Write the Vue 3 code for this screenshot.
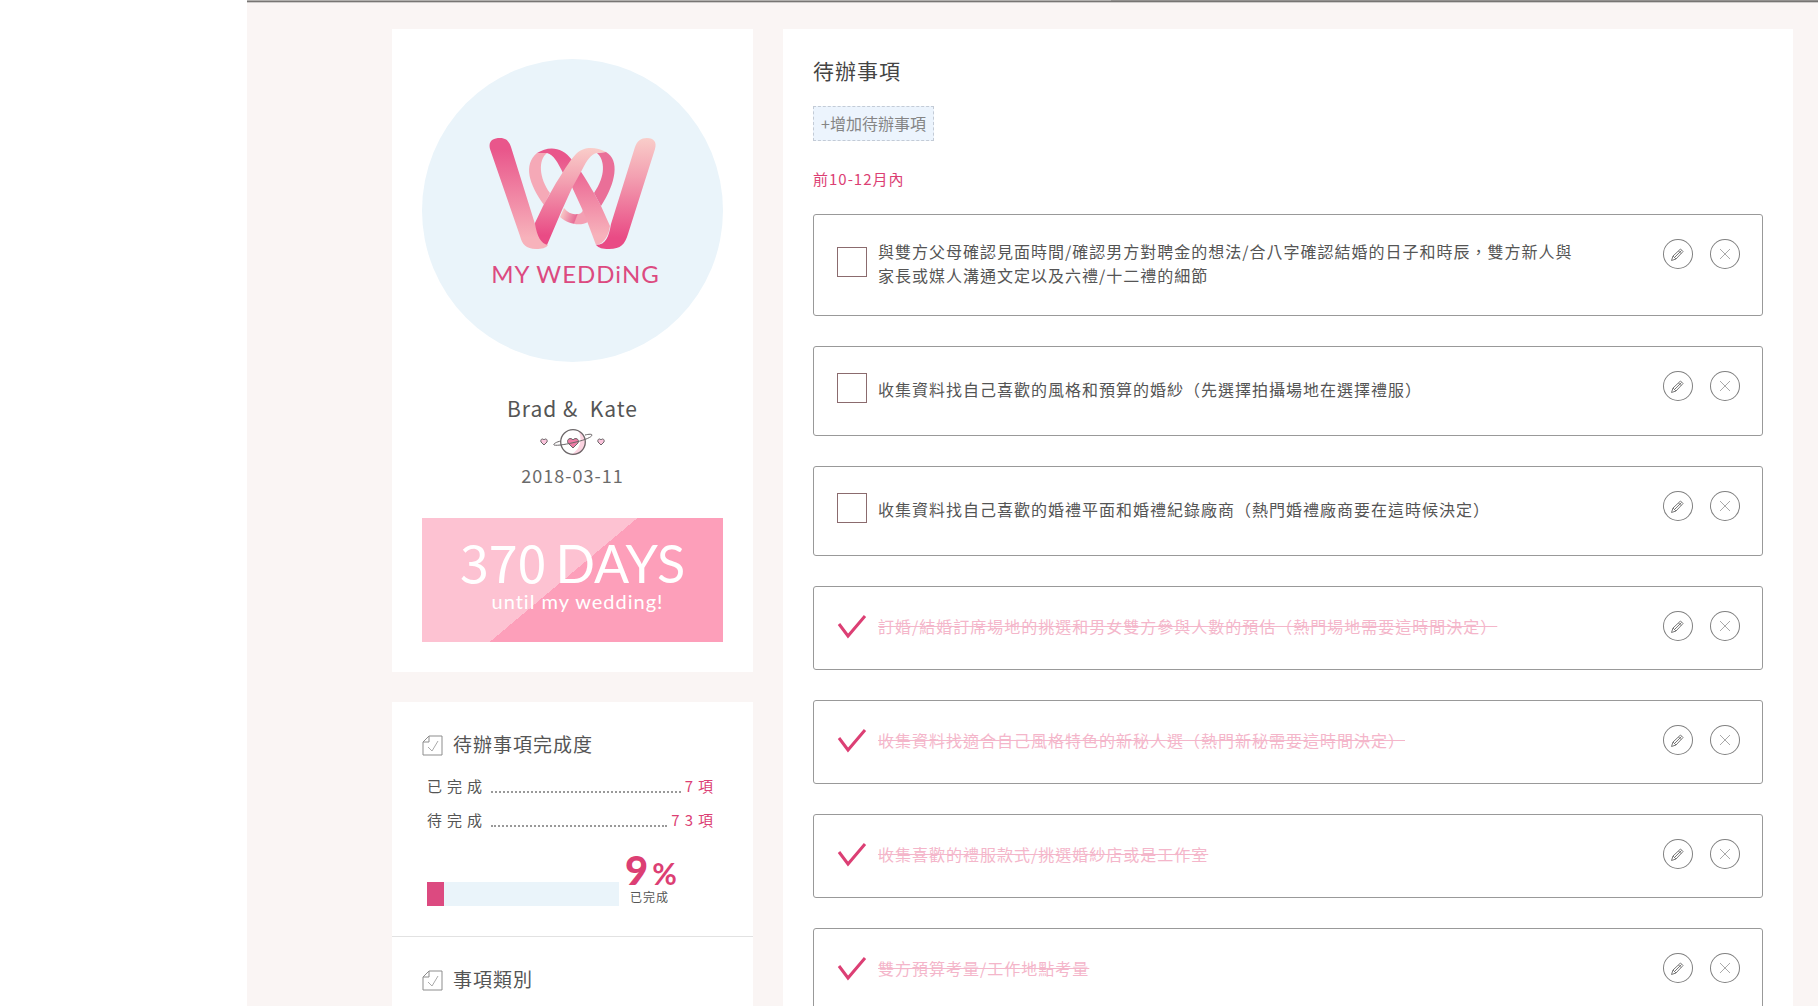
<template>
  <div class="page">
    <div class="gutter"></div>
    <main class="main">
      <div class="topbar"><span class="topbar-left"></span><span class="topbar-right"></span></div>

      <div class="content">
        <aside class="sidebar">
          <!-- 新人資訊 -->
          <section class="card profile">
            <div class="avatar">
              <svg class="avatar-logo" viewBox="0 0 168 112" aria-hidden="true">
                <defs>
                  <linearGradient id="down" x1="0" y1="0" x2="0" y2="1">
                    <stop offset="0.1" stop-color="#e9568b" />
                    <stop offset="0.9" stop-color="#f7b2bb" />
                  </linearGradient>
                  <linearGradient id="up" x1="0" y1="0" x2="0" y2="1">
                    <stop offset="0" stop-color="#f9cdc9" />
                    <stop offset="0.35" stop-color="#f3a0b1" />
                    <stop offset="0.9" stop-color="#e94b85" />
                  </linearGradient>
                  <linearGradient id="loop" gradientUnits="userSpaceOnUse" x1="72" y1="74" x2="93" y2="82">
                    <stop offset="0" stop-color="#f9cdc9" />
                    <stop offset="0.7" stop-color="#e76c96" />
                    <stop offset="0.75" stop-color="#f49fb3" />
                  </linearGradient>
                </defs>
                <path fill="url(#loop)" d="M75 70C79 75 84 77 88 76C92 76 94 74 94 70L99 84C92 88 80 87 71 79Z" />
                <path fill="url(#down)" d="M48 15C59 8 73 8 83 22C93 34 98 43 105 55L112 68L121 88C120 97 115 106 107 107L98 83L94 73L83 49C79 43 77 40 74 35C69 25 65 17 58 15Z" />
                <path fill="#f5a9b7" d="M48 15C34 27 40 46 55 67L61 55C50 40 49 22 58 15Z" />
                <path fill="#ea6f98" d="M117 14C131 22 127 45 112 68L105 55C117 38 116 22 108 15Z" />
                <path fill="url(#up)" d="M117 14C107 9 95 8 87 16C80 23 73 36 67 45L54 68L45 87C43 97 49 107 58 107L73 72L83 50L93 32C98 22 102 16 108 15Z" />
                <path fill="url(#down)" d="M1 11C-1 3 4 0 11 0C17 0 20 3 22 9L46 86C48 98 52 106 59 107C57 110 53 111 47 111C37 111 33 106 31 98Z" />
                <path fill="url(#up)" d="M146 9C148 3 152 0 158 0C165 0 168 4 166 11L139 96C136 106 132 111 120 111C113 111 110 110 107 107C117 107 120 98 122 86Z" />
              </svg>
              <span class="avatar-name">MY WEDDiNG</span>
            </div>

            <h2 class="couple">Brad &amp;&nbsp; Kate</h2>
            <svg class="planet" viewBox="0 0 66 28" aria-hidden="true">
              <path d="M30.500 27a13 13 0 0 0 15-15c-2-6-5-9-7-9c5 10 0 20-8 24z" fill="#fbd3e0" />
              <circle cx="33" cy="14" r="12.300" fill="none" stroke="#6b6668" stroke-width="1.300" />
              <path d="M33 20l-5-5c-2-4 3-6 5-3c2-3 7-1 5 3z" fill="#ee7ba5" stroke="#6b6668" />
              <path d="M21 13c-5 1-8 3-7 4c3 1 14-1 22-3c9-2 16-5 16-7c0-1-3-1-7 0" fill="none" stroke="#6b6668" />
              <path d="M4 17L1 14C0 11 3 10 4 12C5 10 8 11 7 14z" fill="#fbc4dc" stroke="#6b6668" />
              <path d="M61 17L58 14C57 11 60 10 61 12C62 10 65 11 64 14z" fill="#fbc4dc" stroke="#6b6668" />
            </svg>
            <p class="date">2018-03-11</p>

            <div class="countdown">
              <p class="countdown-main">
                <span class="countdown-num">370</span>
                <span class="countdown-unit">DAYS</span>
              </p>
              <p class="countdown-sub">until my wedding!</p>
            </div>
          </section>

          <!-- 完成度 -->
          <div class="card">
            <section class="panel">
              <h3 class="panel-title">
                <svg class="note" viewBox="0 0 21 21" aria-hidden="true">
                  <path d="M7 1H20V20H1V7ZM7 1V7H1" />
                  <path class="note-tick" d="M6 12L10 16L16 6" />
                </svg>
                待辦事項完成度
              </h3>
              <ul class="stats">
                <li v-for="stat in stats" :key="stat.label" class="stat">
                  <span>{{ stat.label }}</span>
                  <span class="dots"></span>
                  <span class="stat-value">{{ stat.count }}項</span>
                </li>
              </ul>
              <div class="progress">
                <div class="bar">
                  <div class="bar-fill" :style="{ width: percent + '%' }"></div>
                </div>
                <div class="percent">
                  <p class="percent-value">{{ percent }}<span class="percent-sign">%</span></p>
                  <p class="percent-label">已完成</p>
                </div>
              </div>
            </section>
            <section class="panel">
              <h3 class="panel-title">
                <svg class="note" viewBox="0 0 21 21" aria-hidden="true">
                  <path d="M7 1H20V20H1V7ZM7 1V7H1" />
                  <path class="note-tick" d="M6 12L10 16L16 6" />
                </svg>
                事項類別
              </h3>
            </section>
          </div>
        </aside>

        <!-- 待辦清單 -->
        <section class="card todos">
          <h1 class="title">待辦事項</h1>
          <button type="button" class="add">+增加待辦事項</button>
          <h2 class="period">前10-12月內</h2>

          <ul class="list">
            <li v-for="todo in todos" :key="todo.id" class="todo" :class="{ done: todo.done }">
              <label class="todo-label">
                <input v-model="todo.done" type="checkbox" class="todo-input" />
                <svg v-if="todo.done" class="tick" viewBox="0 0 30 30" aria-hidden="true">
                  <path d="M2 13L11 25L28 5" />
                </svg>
                <span v-else class="box"></span>
                <span class="todo-text">{{ todo.text }}</span>
              </label>
              <div class="actions">
                <button type="button" class="round" aria-label="編輯">
                  <svg viewBox="0 0 30 30">
                    <path d="M8.500 21.500L10 17L17.500 10L20 12.500L13 20ZM10 17L13 20M12 18L18.500 11.500M15.500 12L18 14.500" />
                  </svg>
                </button>
                <button type="button" class="round" aria-label="刪除" @click="removeTodo(todo.id)">
                  <svg viewBox="0 0 30 30">
                    <path class="cross" d="M10 10L20 20M20 10L10 20" />
                  </svg>
                </button>
              </div>
            </li>
          </ul>
        </section>
      </div>
    </main>
  </div>
</template>

<script setup>
import { ref } from 'vue'

const percent = 9

const stats = [
  { label: '已完成', count: 7 },
  { label: '待完成', count: 73 },
]

const todos = ref([
  { id: 1, done: false, text: '與雙方父母確認見面時間/確認男方對聘金的想法/合八字確認結婚的日子和時辰，雙方新人與家長或媒人溝通文定以及六禮/十二禮的細節' },
  { id: 2, done: false, text: '收集資料找自己喜歡的風格和預算的婚紗（先選擇拍攝場地在選擇禮服）' },
  { id: 3, done: false, text: '收集資料找自己喜歡的婚禮平面和婚禮紀錄廠商（熱門婚禮廠商要在這時候決定）' },
  { id: 4, done: true, text: '訂婚/結婚訂席場地的挑選和男女雙方參與人數的預估（熱門場地需要這時間決定）' },
  { id: 5, done: true, text: '收集資料找適合自己風格特色的新秘人選（熱門新秘需要這時間決定）' },
  { id: 6, done: true, text: '收集喜歡的禮服款式/挑選婚紗店或是工作室' },
  { id: 7, done: true, text: '雙方預算考量/工作地點考量' },
])

const removeTodo = (id) => {
  todos.value = todos.value.filter((todo) => todo.id !== id)
}
</script>

<style>
html,
body {
  height: 100%;
  background: #fff;
}

body {
  overflow: hidden;
}

#app {
  height: 100%;
}
</style>

<style scoped>
* {
  box-sizing: border-box;
}

h1,
h2,
h3,
p,
ul {
  margin: 0;
  padding: 0;
  font-weight: 400;
  list-style: none;
}

.page {
  display: flex;
  height: 100%;
  overflow: hidden;
  color: #555;
  font-family: 'Noto Sans CJK TC', 'Noto Sans', sans-serif;
  font-size: 16px;
  line-height: 24px;
  letter-spacing: 1px;
}

.gutter {
  flex: 0 1 247px;
}

.main {
  flex: 1;
  min-width: 0;
  background: #faf5f4;
}

.topbar {
  display: flex;
  height: 3px;
}

.topbar-left,
.topbar-right {
  flex: 55;
  background: #b1afad;
  border-bottom: 1px solid #cfcccb;
  box-shadow: inset 0 -1px #777573;
}

.topbar-right {
  flex: 45;
  background: #93918f;
}

.content {
  display: flex;
  align-items: flex-start;
  gap: 30px;
  padding: 26px 25px 30px 145px;
}

.sidebar {
  flex: 0 0 361px;
}

.card {
  background: #fff;
}

.profile {
  display: flex;
  flex-direction: column;
  align-items: center;
  padding: 30px;
  margin-bottom: 30px;
}

.avatar {
  display: flex;
  flex-direction: column;
  align-items: center;
  width: 100%;
  height: 303px;
  padding-top: 79px;
  border-radius: 50%;
  background: #eaf4fa;
}

.avatar-logo {
  width: 168px;
  height: 112px;
}

.avatar-name {
  margin-top: 8px;
  padding-left: 6px;
  color: #dc4a80;
  font-family: Lato, 'Noto Sans', sans-serif;
  font-size: 24px;
  line-height: 32px;
}

.couple {
  margin-top: 31px;
  font-size: 21px;
  line-height: 30px;
}

.planet {
  width: 66px;
  height: 28px;
  margin-top: 5px;
}

.date {
  margin: 7px 0 31px;
  color: #6b6b6b;
  font-size: 18px;
}

.countdown {
  width: 100%;
  height: 124px;
  padding-top: 17px;
  color: #fff;
  background: linear-gradient(140deg, #fdc2d2 48%, #fd9fba 48%);
}

.countdown-main {
  display: flex;
  align-items: baseline;
  justify-content: center;
  gap: 9px;
  line-height: 52px;
  letter-spacing: 0;
}

.countdown-num {
  font-size: 52px;
}

.countdown-unit {
  font-family: Lato, sans-serif;
  font-size: 52px;
  font-weight: 400;
}

.countdown-sub {
  padding-left: 10px;
  font-family: Lato, sans-serif;
  font-size: 20px;
  text-align: center;
}

.panel {
  padding: 30px;
}

.panel + .panel {
  border-top: 1px solid #e2e2e2;
}

.panel-title {
  display: flex;
  align-items: flex-end;
  gap: 10px;
  font-size: 19px;
}

.note {
  width: 21px;
  height: 21px;
  fill: none;
  stroke: #8d8d8d;
}

.note-tick {
  stroke: #aaa;
}

.stats {
  display: grid;
  gap: 10px;
  margin-top: 18px;
  padding: 0 5px;
}

.stat {
  display: flex;
  font-size: 15px;
  letter-spacing: 5px;
}

.dots {
  flex: 1;
  margin: 0 4px 5px 4px;
  border-bottom: 2px dotted #999;
}

.stat-value {
  color: #dc3f74;
}

.progress {
  display: flex;
  align-items: flex-end;
  gap: 6px;
  margin-top: 19px;
  padding: 0 5px;
}

.bar {
  width: 66%;
  height: 24px;
  background: #eaf4fa;
}

.bar-fill {
  height: 100%;
  background: #dc4a80;
}

.percent-value {
  display: flex;
  align-items: baseline;
  gap: 4px;
  height: 38px;
  color: #dc3f74;
  font-family: Lato, sans-serif;
  font-size: 40px;
  font-weight: 900;
  line-height: 38px;
  letter-spacing: 0;
}

.percent-sign {
  font-size: 30px;
  font-weight: 700;
}

.percent-label {
  padding: 0 0 1px 5px;
  font-size: 12px;
  line-height: 16px;
}

.todos {
  flex: 1;
  min-width: 0;
  padding: 29px 30px 30px;
}

.title {
  font-size: 21px;
  color: #444;
}

.add {
  display: block;
  height: 35px;
  margin: 24px 0 26px;
  padding: 0 7px 2px;
  border: 1px dashed #c3cbd6;
  background: #ecf4fd;
  color: #858585;
  font-family: inherit;
  font-size: 16px;
}

.period {
  margin-bottom: 23px;
  color: #dc3f74;
  font-size: 15px;
}

.list {
  display: grid;
  gap: 30px;
}

.todo {
  display: flex;
  align-items: flex-start;
  justify-content: space-between;
  padding: 21px 22px 28px 23px;
  border: 1px solid #999;
  border-radius: 3px;
}

.todo-label {
  position: relative;
  display: flex;
  align-items: center;
  gap: 11px;
  width: 83%;
  min-height: 39px;
  cursor: pointer;
}

.todo-input {
  position: absolute;
  width: 30px;
  height: 30px;
  margin: 0;
  opacity: 0;
}

.box {
  flex: none;
  width: 30px;
  height: 30px;
  border: 1px solid #8b6b6e;
}

.tick {
  flex: none;
  width: 30px;
  height: 30px;
  fill: none;
  stroke: #dc3f74;
  stroke-width: 3;
}

.todo-text {
  padding-top: 3px;
}

.done {
  padding-bottom: 25px;
}

.done .todo-label {
  min-height: 36px;
}

.done .todo-text {
  padding-top: 0;
  color: #f4b6ca;
  text-decoration: line-through;
}

.actions {
  display: flex;
  gap: 17px;
  margin-top: 3px;
}

.round {
  width: 30px;
  height: 30px;
  padding: 0;
  border: 0;
  border-radius: 50%;
  background: none;
  box-shadow: inset 0 0 0 1px #808080;
  cursor: pointer;
}

.round svg {
  display: block;
  fill: none;
  stroke: #777;
}

.round .cross {
  stroke: #aaa;
}
</style>
